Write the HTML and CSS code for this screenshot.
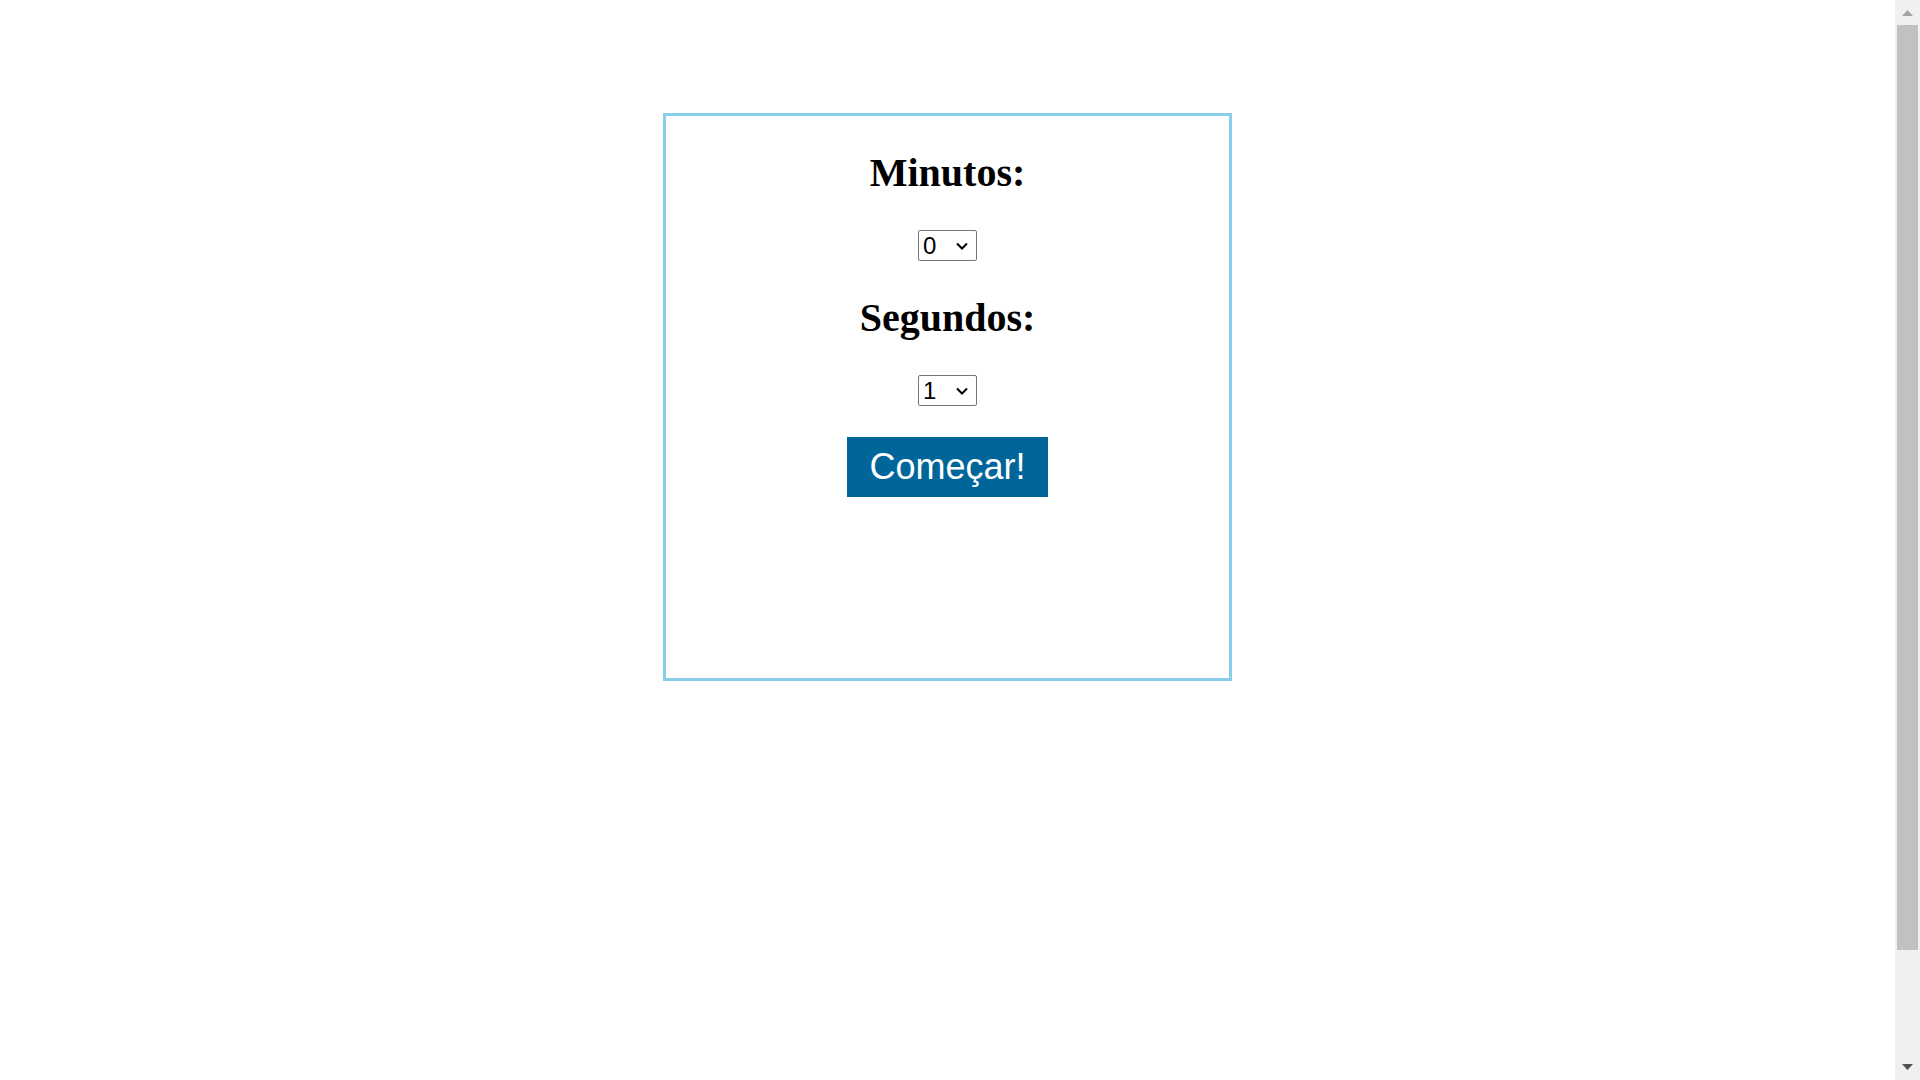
FILE: index.html
```html
<!DOCTYPE html>
<html lang="pt-BR">
<head>
<meta charset="utf-8">
<title>Timer</title>
<link rel="stylesheet" href="styles.css">
</head>
<body>
<main class="page">
  <form class="timer">
    <h2 class="title"><label for="minutos">Minutos:</label></h2>
    <div class="picker">
      <select class="select" id="minutos"><option>0</option><option>1</option><option>2</option><option>3</option></select>
      <svg class="chevron" viewBox="0 0 12 8" aria-hidden="true"><path d="M1 1.5 6 6.5 11 1.5"/></svg>
    </div>
    <h2 class="title"><label for="segundos">Segundos:</label></h2>
    <div class="picker">
      <select class="select" id="segundos"><option>1</option><option>2</option><option>3</option></select>
      <svg class="chevron" viewBox="0 0 12 8" aria-hidden="true"><path d="M1 1.5 6 6.5 11 1.5"/></svg>
    </div>
    <button class="start" type="button">Começar!</button>
  </form>
</main>
<div class="scrollbar" aria-hidden="true">
  <svg class="arrow arrow-up" viewBox="0 0 25 25"><path d="M7 16 12.5 10 18 16Z"/></svg>
  <div class="thumb"></div>
  <div class="track"></div>
  <svg class="arrow arrow-down" viewBox="0 0 25 25"><path d="M7 9 12.5 15 18 9Z"/></svg>
</div>
</body>
</html>
```

FILE: styles.css
```css
* {
  box-sizing: border-box;
}

body {
  margin: 0;
  display: flex;
  height: 100vh;
  background: #fff;
  color: #000;
  font-family: "Liberation Serif", "Times New Roman", serif;
}

.page {
  flex: 1;
  padding-top: 113px;
}

.timer {
  width: 30%;
  min-width: 240px;
  min-height: 568px;
  margin: 0 auto;
  border: 3px solid skyblue;
  display: flex;
  flex-direction: column;
  align-items: center;
}

.title {
  margin: 34px 0;
  font-size: 40px;
  line-height: 46px;
  font-weight: bold;
}

.picker {
  display: grid;
  align-items: center;
}

.select {
  grid-area: 1 / 1;
  width: 59px;
  height: 31px;
  margin: 0;
  padding: 0 4px;
  appearance: none;
  border: 1px solid #767676;
  border-radius: 2px;
  background: #fff;
  color: #000;
  font: 24px/27px "Liberation Sans", Arial, sans-serif;
}

.chevron {
  grid-area: 1 / 1;
  justify-self: end;
  width: 12px;
  height: 8px;
  margin-right: 9px;
  pointer-events: none;
  fill: none;
  stroke: #000;
  stroke-width: 2;
}

.start {
  margin-top: 31px;
  padding: 0 22px;
  height: 60px;
  border: 0;
  background: #069;
  color: #fff;
  font: 36px/42px "Liberation Sans", Arial, sans-serif;
}

.scrollbar {
  width: 25px;
  display: flex;
  flex-direction: column;
  background: #f0f0f0;
}

.arrow {
  width: 25px;
  height: 25px;
}

.arrow-up {
  fill: #a3a3a3;
}

.arrow-down {
  fill: #505050;
}

.thumb {
  flex: 925;
  margin: 0 2px;
  background: #c1c1c1;
}

.track {
  flex: 105;
}
```
